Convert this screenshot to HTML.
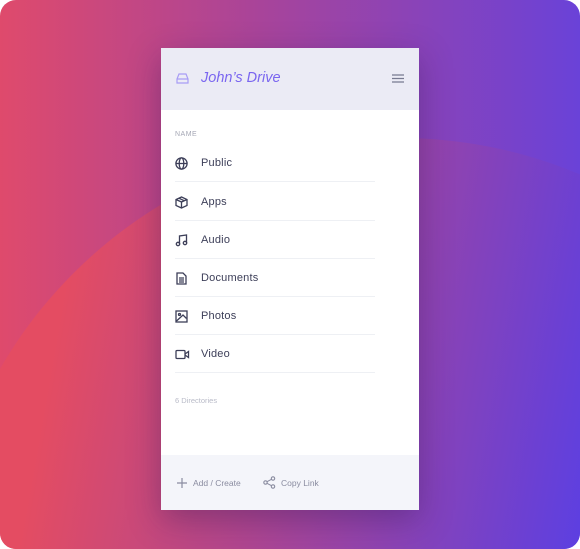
<!DOCTYPE html>
<html><head><style>
*{margin:0;padding:0;box-sizing:border-box}
html,body{width:580px;height:549px;overflow:hidden}
body{background:#fff;font-family:"Liberation Sans",sans-serif;position:relative}
.bg{position:absolute;left:0;top:0;width:580px;height:549px;border-radius:16px;overflow:hidden;background:linear-gradient(90deg,#df4a6c 0%,#a8449a 45%,#6a42d8 100%)}
.circ{position:absolute;left:-62px;top:138px;width:924px;height:924px;border-radius:50%;background:linear-gradient(100deg,#e44c62 14%,#b04690 35%,#5c3fe2 66%)}
.card{position:absolute;left:161px;top:48px;width:258px;height:462px;background:#fff;box-shadow:0 10px 30px rgba(40,20,80,.35);overflow:hidden}
.hd{height:62px;background:#ebebf5;position:relative}
.hd .t{position:absolute;left:40px;top:22px;font-style:italic;font-size:14.5px;color:#7a66f0}
.lbl{position:absolute;left:14px;top:83px;font-size:7px;letter-spacing:.5px;color:#a5a7b5}
.row{position:absolute;left:14px;width:200px;height:38px;border-bottom:1px solid #eef0f4;font-size:11px;color:#3c3e58;letter-spacing:.2px}
.row span{position:absolute;left:26px;top:13px}
.row svg{position:absolute;left:0;top:13px}
.dirs{position:absolute;left:14px;top:348px;font-size:7.5px;color:#b9bbc8}
.ft{position:absolute;left:0;top:407px;width:258px;height:55px;background:#f4f5fa;font-size:8.5px;color:#8a8ca0}
</style></head><body>
<div class="bg"><div class="circ"></div></div>
<div class="card">
<div class="hd">
<svg style="position:absolute;left:15px;top:25px" width="13" height="11" viewBox="0 0 13 11" fill="none" stroke="#a89cf5" stroke-width="1.2"><path d="M1 6 L3 1 H10 L12 6 V10 H1 Z M1 6 H12"/></svg>
<div class="t">John’s Drive</div>
<svg style="position:absolute;left:231px;top:26px" width="12" height="9" viewBox="0 0 12 9" stroke="#777a90" stroke-width="1.3"><path d="M0 1H12M0 4.5H12M0 8H12"/></svg>
</div>
<div class="lbl">NAME</div>
<div class="row" style="top:96px"><svg width="13" height="13" viewBox="0 0 13 13" fill="none" stroke="#3c3e58" stroke-width="1.3"><circle cx="6.5" cy="6.5" r="5.6"/><ellipse cx="6.5" cy="6.5" rx="2.3" ry="5.6"/><path d="M1 6.5H12"/></svg><span>Public</span></div>
<div class="row" style="top:135px"><svg width="13" height="13" viewBox="0 0 13 13" fill="none" stroke="#3c3e58" stroke-width="1.3"><path d="M6.5 1L12 3.5V9.5L6.5 12L1 9.5V3.5Z M1 3.5L6.5 6L12 3.5 M6.5 6V12 M3.8 2.2L9.2 4.7"/></svg><span>Apps</span></div>
<div class="row" style="top:173px"><svg width="13" height="13" viewBox="0 0 13 13" fill="none" stroke="#3c3e58" stroke-width="1.3"><path d="M4.5 10V2L11.5 1V9"/><circle cx="3" cy="10" r="1.7"/><circle cx="10" cy="9" r="1.7"/></svg><span>Audio</span></div>
<div class="row" style="top:211px"><svg width="13" height="13" viewBox="0 0 13 13" fill="none" stroke="#3c3e58" stroke-width="1.3"><path d="M2 1H8L11 4V12H2Z M4 6H9M4 8H9M4 10H9"/></svg><span>Documents</span></div>
<div class="row" style="top:249px"><svg width="13" height="13" viewBox="0 0 13 13" fill="none" stroke="#3c3e58" stroke-width="1.3"><rect x="1" y="1" width="11" height="11"/><path d="M1.5 11L8 5L11.5 8.5"/><circle cx="4.5" cy="4.5" r="1"/></svg><span>Photos</span></div>
<div class="row" style="top:287px"><svg width="15" height="13" viewBox="0 0 15 13" fill="none" stroke="#3c3e58" stroke-width="1.3"><rect x="1" y="2.5" width="9" height="8" rx="1"/><path d="M10 6L13.5 3.5V9.5L10 7"/></svg><span>Video</span></div>
<div class="dirs">6 Directories</div>
<div class="ft">
<svg style="position:absolute;left:16px;top:23px" width="10" height="10" viewBox="0 0 10 10" stroke="#8a8ca0" stroke-width="1.2"><path d="M5 0V10M0 5H10"/></svg>
<span style="position:absolute;left:32px;top:23px">Add / Create</span>
<svg style="position:absolute;left:102px;top:21px" width="13" height="13" viewBox="0 0 13 13" fill="none" stroke="#8a8ca0" stroke-width="1.1"><circle cx="10" cy="2.5" r="1.7"/><circle cx="2.5" cy="6.5" r="1.7"/><circle cx="10" cy="10.5" r="1.7"/><path d="M4 5.7L8.5 3.3M4 7.3L8.5 9.7"/></svg>
<span style="position:absolute;left:120px;top:23px">Copy Link</span>
</div>
</div>
</body></html>
